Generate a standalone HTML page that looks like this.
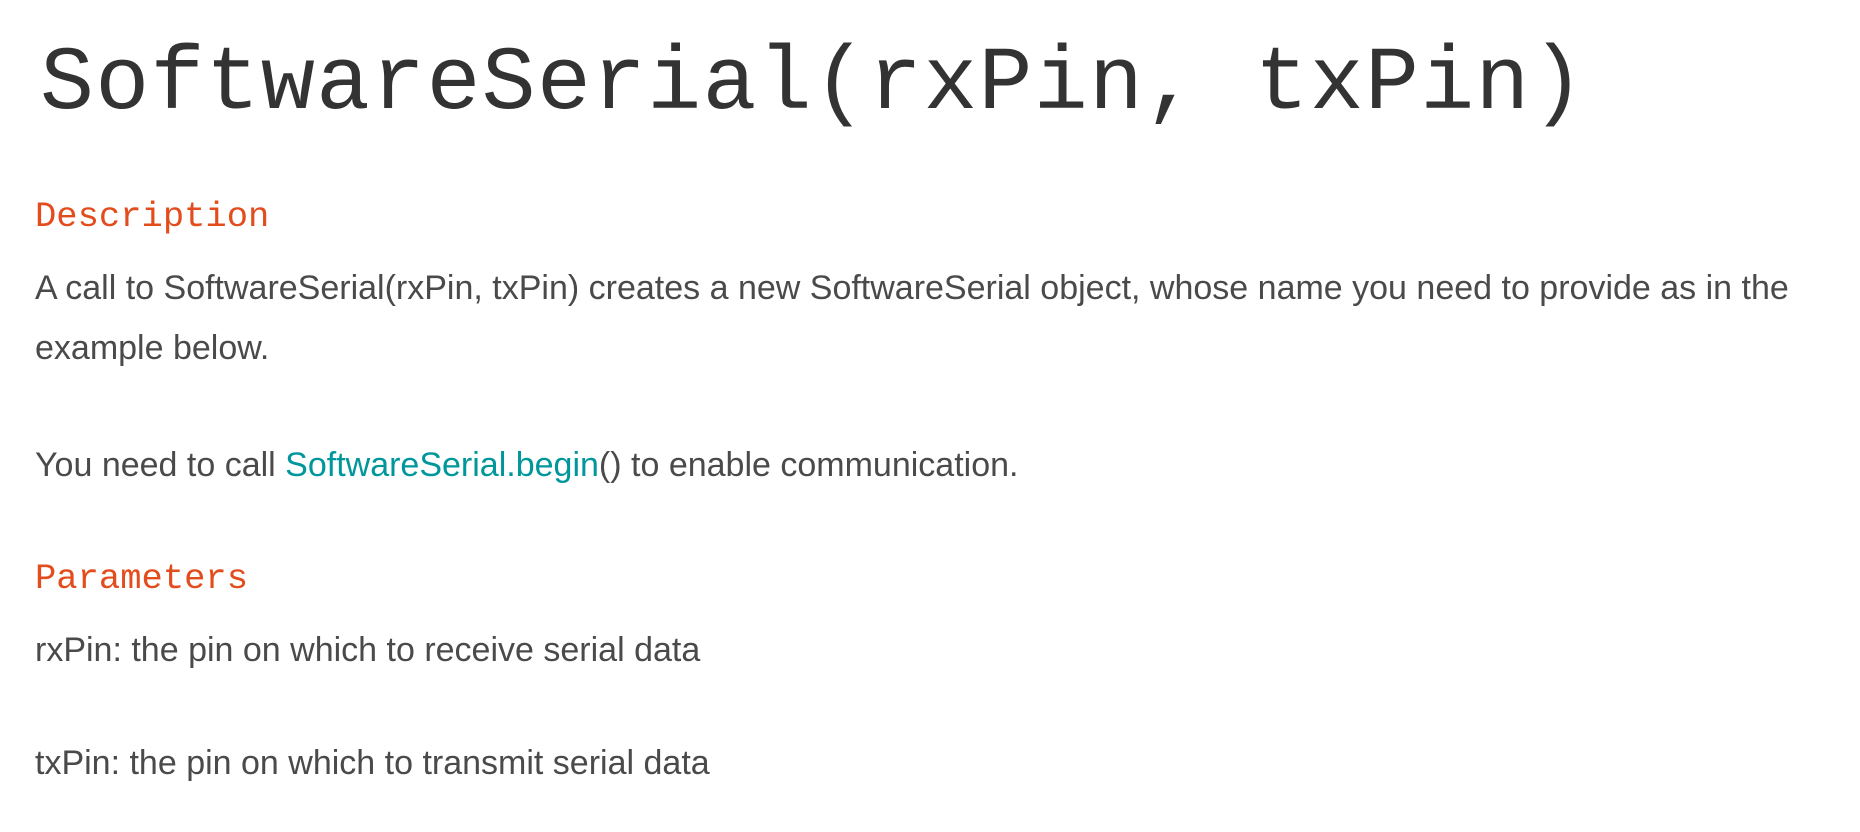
<!DOCTYPE html>
<html><head><meta charset="utf-8"><style>
html,body{margin:0;padding:0;background:#fff;width:1860px;height:832px;overflow:hidden;position:relative}
div{position:absolute;white-space:nowrap;line-height:1}
.t{left:40px;top:34px;font:90px "Liberation Mono",monospace;color:#333;letter-spacing:1.2px}
.h{left:35px;font:35.5px "Liberation Mono",monospace;color:#e34c1c}
.b{left:35px;font:34px "Liberation Sans",sans-serif;color:#4a4a4a;letter-spacing:0px}
.a{color:#00979c}
</style></head><body>
<div class="t">SoftwareSerial(rxPin, txPin)</div>
<div class="h" style="top:196px">Description</div>
<div class="b" style="top:269px">A call to SoftwareSerial(rxPin, txPin) creates a new SoftwareSerial object, whose name you need to provide as in the</div>
<div class="b" style="top:329px">example below.</div>
<div class="b" style="top:446px">You need to call <span class="a">SoftwareSerial.begin</span>() to enable communication.</div>
<div class="h" style="top:558px">Parameters</div>
<div class="b" style="top:631px">rxPin: the pin on which to receive serial data</div>
<div class="b" style="top:744px">txPin: the pin on which to transmit serial data</div>
</body></html>
